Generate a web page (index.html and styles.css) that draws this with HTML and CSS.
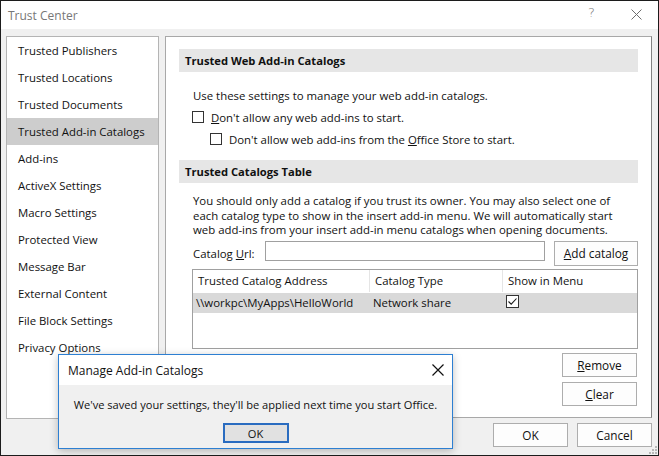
FILE: index.html
```html
<!DOCTYPE html>
<html>
<head>
<meta charset="utf-8">
<link rel="stylesheet" href="styles.css">
</head>
<body>
<div class="window">
  <div class="titlebar">
    <span class="title">Trust Center</span>
    <span class="help">?</span>
    <svg class="wclose" width="11" height="11" viewBox="0 0 11 11"><path d="M0.5 0.5 L10.5 10.5 M10.5 0.5 L0.5 10.5" stroke="#6e6e6e" stroke-width="1" fill="none"/></svg>
  </div>
  <div class="main">
    <ul class="nav">
      <li>Trusted Publishers</li>
      <li>Trusted Locations</li>
      <li>Trusted Documents</li>
      <li class="active">Trusted Add-in Catalogs</li>
      <li>Add-ins</li>
      <li>ActiveX Settings</li>
      <li>Macro Settings</li>
      <li>Protected View</li>
      <li>Message Bar</li>
      <li>External Content</li>
      <li>File Block Settings</li>
      <li>Privacy Options</li>
    </ul>
    <div class="content">
      <div class="section-head">Trusted Web Add-in Catalogs</div>
      <p class="intro">Use these settings to manage your web add-in catalogs.</p>
      <div class="check-row">
        <span class="box"></span><span><u>D</u>on't allow any web add-ins to start.</span>
      </div>
      <div class="check-row sub">
        <span class="box"></span><span>Don't allow web add-ins from the <u>O</u>ffice Store to start.</span>
      </div>
      <div class="section-head second">Trusted Catalogs Table</div>
      <p class="desc">You should only add a catalog if you trust its owner. You may also select one of each catalog type to show in the insert add-in menu. We will automatically start web add-ins from your insert add-in menu catalogs when opening documents.</p>
      <div class="url-row">
        <span class="url-label">Catalog <u>U</u>rl:</span>
        <span class="url-input"></span>
        <span class="btn add-btn"><u>A</u>dd catalog</span>
      </div>
      <div class="table">
        <div class="thead">
          <div class="th">Trusted Catalog Address</div>
          <div class="th">Catalog Type</div>
          <div class="th last">Show in Menu</div>
        </div>
        <div class="trow">
          <div class="td">\\workpc\MyApps\HelloWorld</div>
          <div class="td">Network share</div>
          <div class="td"><svg class="tick" width="13" height="13" viewBox="0 0 13 13"><rect x="0.5" y="0.5" width="12" height="12" fill="#fff" stroke="#333"/><path d="M2.5 6.5 L5.2 9.2 L10.5 3.5" stroke="#1a1a1a" stroke-width="1.1" fill="none"/></svg></div>
        </div>
      </div>
      <div class="side-btns">
        <span class="btn side"><u>R</u>emove</span>
        <span class="btn side"><u>C</u>lear</span>
      </div>
    </div>
  </div>
  <div class="footer">
    <span class="btn foot">OK</span>
    <span class="btn foot">Cancel</span>
  </div>
  <svg class="grip" width="8" height="8" viewBox="0 0 8 8">
    <rect x="6" y="0" width="2" height="2" fill="#b8b8b8"/>
    <rect x="3" y="3" width="2" height="2" fill="#b8b8b8"/>
    <rect x="6" y="3" width="2" height="2" fill="#b8b8b8"/>
    <rect x="0" y="6" width="2" height="2" fill="#b8b8b8"/>
    <rect x="3" y="6" width="2" height="2" fill="#b8b8b8"/>
    <rect x="6" y="6" width="2" height="2" fill="#b8b8b8"/>
  </svg>
  <div class="msgbox">
    <div class="msg-title">
      <span>Manage Add-in Catalogs</span>
      <svg width="12" height="12" viewBox="0 0 12 12"><path d="M0.5 0.5 L11.5 11.5 M11.5 0.5 L0.5 11.5" stroke="#111" stroke-width="1.2" fill="none"/></svg>
    </div>
    <div class="msg-body">
      <p class="msg-text">We've saved your settings, they'll be applied next time you start Office.</p>
      <span class="msg-ok">OK</span>
    </div>
  </div>
</div>
</body>
</html>
```
FILE: styles.css
```css
* { box-sizing: border-box; }
html, body { margin: 0; padding: 0; background: #fff; }
body {
  font-family: "Open Sans", "Noto Sans", sans-serif;
  font-size: 11.4px;
  color: #111;
}
u { text-decoration: underline; text-underline-offset: 1px; }
.window {
  position: relative;
  width: 659px;
  height: 456px;
  border: 1px solid #1c1c1c;
  background: #f0f0f0;
  display: flex;
  flex-direction: column;
}
.titlebar {
  height: 28px;
  background: #fff;
  display: flex;
  align-items: center;
  padding-left: 7px;
  position: relative;
}
.title { color: #777; font-size: 12px; }
.help {
  position: absolute;
  left: 587px;
  top: 4px;
  color: #777;
  font-size: 13px;
  font-family: "DejaVu Sans", sans-serif;
  font-weight: 300;
}
.wclose { position: absolute; left: 630px; top: 8px; }
.main {
  display: flex;
  gap: 6px;
  padding: 7px 6px 0 5px;
  height: 389px;
}
.nav {
  list-style: none;
  margin: 0;
  padding: 0;
  width: 153px;
  height: 383px;
  background: #fff;
  border: 1px solid #b4b4b4;
}
.nav li {
  height: 27px;
  line-height: 27px;
  padding-left: 11px;
  white-space: nowrap;
}
.nav li.active { background: #cdcdcd; }
.content {
  width: 487px;
  height: 382px;
  background: #fff;
  border: 1px solid #a8a8a8;
  border-right-color: #828282;
  padding: 12px 13px 0 13px;
  display: flex;
  flex-direction: column;
}
.section-head {
  height: 23px;
  line-height: 23px;
  background: #e6e6e6;
  padding-left: 6px;
  font-weight: 700;
  font-size: 11.2px;
}
.section-head.second { margin-top: 11px; }
.intro { margin: 16px 0 0 14px; line-height: 16px; }
.check-row {
  display: flex;
  align-items: center;
  gap: 7px;
  height: 20px;
  margin-top: 3px;
  padding-left: 13px;
}
.check-row.sub { padding-left: 31px; margin-top: 2px; }
.box {
  width: 12px;
  height: 12px;
  border: 1px solid #333;
  background: #fff;
  flex: none;
}
.desc { margin: 11px 0 0 14px; line-height: 14.5px; max-width: 434px; }
.url-row {
  display: flex;
  align-items: center;
  margin-top: 3px;
  height: 25px;
  padding-left: 14px;
}
.url-label { width: 72px; }
.url-input {
  width: 280px;
  height: 20px;
  border: 1px solid #a0a0a0;
  background: #fff;
  margin-top: -4px;
}
.btn {
  display: flex;
  align-items: center;
  justify-content: center;
  background: #fdfdfd;
  border: 1px solid #adadad;
}
.add-btn { margin-left: auto; width: 84px; height: 25px; font-size: 11.8px; }
.table {
  margin: 3px 0 0 13px;
  height: 80px;
  border: 1px solid #a0a0a0;
  background: #fff;
}
.thead, .trow {
  display: grid;
  grid-template-columns: 177px 133px 1fr;
}
.thead { height: 22px; }
.th {
  line-height: 21px;
  padding-left: 5px;
  border-right: 1px solid #e5e5e5;
}
.th.last { border-right: none; }
.trow { height: 20px; background: #d9d9d9; margin-top: 1px; }
.td { line-height: 20px; padding-left: 3px; white-space: nowrap; }
.td .tick { vertical-align: middle; margin-top: -3px; margin-left: 0px; }
.side-btns {
  display: flex;
  flex-direction: column;
  align-items: flex-end;
  gap: 5px;
  margin-top: 4px;
  margin-right: 1px;
}
.side { width: 75px; height: 24px; font-size: 11.8px; }
.footer {
  display: flex;
  justify-content: flex-end;
  gap: 9px;
  padding: 5px 6px 0 0;
}
.foot { width: 75px; height: 24px; font-size: 11.8px; }
.grip { position: absolute; right: 1px; bottom: 1px; }
.msgbox {
  position: absolute;
  left: 57px;
  top: 353px;
  width: 395px;
  height: 95px;
  border: 1px solid #2d7fd2;
  background: #f0f0f0;
  box-shadow: 0 2px 8px rgba(0,0,0,0.25);
  display: flex;
  flex-direction: column;
}
.msg-title {
  height: 30px;
  background: #fff;
  display: flex;
  align-items: center;
  justify-content: space-between;
  padding: 0 8px 0 9px;
  font-size: 12px;
}
.msg-body {
  flex: 1;
  display: flex;
  flex-direction: column;
  align-items: center;
  font-size: 11.1px;
}
.msg-text { margin: 12px 0 0 0; line-height: 16px; }
.msg-ok {
  margin-top: 10px;
  width: 66px;
  height: 20px;
  border: 2px solid #2a6cc0;
  background: #e1e1e1;
  display: flex;
  align-items: center;
  justify-content: center;
}
```
